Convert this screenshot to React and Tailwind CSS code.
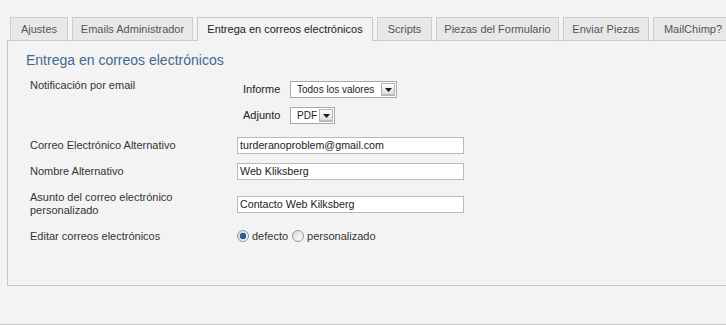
import React from "react";

const tabs = [
  { label: "Ajustes", w: "w-[58px]" },
  { label: "Emails Administrador", w: "w-[121px]" },
  { label: "Entrega en correos electrónicos", w: "w-[176px]", active: true },
  { label: "Scripts", w: "w-[55px]" },
  { label: "Piezas del Formulario", w: "w-[123px]" },
  { label: "Enviar Piezas", w: "w-[86px]" },
  { label: "MailChimp?", w: "w-[80px]" },
];

function Arrow() {
  return (
    <span className="flex h-[13px] w-[14px] shrink-0 items-center justify-center border border-[#b5b5b5] bg-gradient-to-b from-[#fdfdfd] to-[#d9d9d9] shadow-[inset_0_-1px_0_#c0c0c0]">
      <svg width="7" height="4" viewBox="0 0 7 4">
        <polygon points="0,0 7,0 3.5,4" fill="#1a1a1a" />
      </svg>
    </span>
  );
}

function Select({ value, w }) {
  return (
    <div className={`flex h-[17px] ${w} items-center justify-between border border-[#a8a8a8] bg-white pl-[6px] pr-[1px] text-[10px] text-[#222]`}>
      <span className="whitespace-nowrap leading-[14px]">{value}</span>
      <Arrow />
    </div>
  );
}

function Input({ value }) {
  return (
    <div className="flex h-[17px] w-[227px] items-center whitespace-nowrap border border-[#b9b9b9] bg-white pl-[2px] text-[10.7px] leading-[13px] text-[#222]">
      {value}
    </div>
  );
}

function Radio({ checked }) {
  return (
    <span className="flex h-[12px] w-[12px] shrink-0 items-center justify-center rounded-full border border-[#8c99a6] bg-gradient-to-br from-[#dcdcdc] to-[#ffffff]">
      {checked && <span className="h-[6px] w-[6px] rounded-full bg-[#2c5f93] shadow-[0_0_1px_#0b3566]" />}
    </span>
  );
}

export default function App() {
  return (
    <div className="h-[325px] w-[726px] overflow-hidden border-b border-[#c6c6c6] bg-[#f3f3f3] font-['Liberation_Sans',Arial,sans-serif] text-[11px] text-[#333]">
      <div className="flex gap-[4px] pl-[10px] pt-[17px]">
        {tabs.map((t) =>
          t.active ? (
            <div
              key={t.label}
              className={`relative z-10 flex h-[24px] shrink-0 items-center justify-center whitespace-nowrap border border-b-0 border-[#c8c8c8] bg-[#f3f3f3] text-[#222] ${t.w}`}
            >
              {t.label}
            </div>
          ) : (
            <div
              key={t.label}
              className={`flex h-[24px] shrink-0 items-center justify-center whitespace-nowrap border border-[#cdcdcd] bg-[#e8e8e8] text-[#555] ${t.w}`}
            >
              {t.label}
            </div>
          )
        )}
      </div>
      <div className="-mt-px ml-[7px] h-[246px] border border-r-0 border-[#c8c8c8] pl-[18px] pt-[11px]">
        <h2 className="text-[14px] leading-[17px] text-[#416a8e]">Entrega en correos electrónicos</h2>
        <div className="ml-[4px] mt-[7px] flex flex-col">
          <div className="flex items-start">
            <div className="w-[207px] pt-[3px] leading-[13px]">Notificación por email</div>
            <div className="flex flex-col gap-[9px] pl-[6px] pt-[5px]">
              <div className="flex items-center">
                <span className="w-[47px] text-[#222]">Informe</span>
                <Select value="Todos los valores" w="w-[107px]" />
              </div>
              <div className="flex items-center">
                <span className="w-[47px] text-[#222]">Adjunto</span>
                <Select value="PDF" w="w-[45px]" />
              </div>
            </div>
          </div>
          <div className="mt-[13px] flex items-center">
            <div className="w-[207px] leading-[13px]">Correo Electrónico Alternativo</div>
            <Input value="turderanoproblem@gmail.com" />
          </div>
          <div className="mt-[9px] flex items-center">
            <div className="w-[207px] leading-[13px]">Nombre Alternativo</div>
            <Input value="Web Kliksberg" />
          </div>
          <div className="mt-[11px] flex items-center">
            <div className="w-[207px] leading-[13px]">
              Asunto del correo electrónico
              <br />
              personalizado
            </div>
            <Input value="Contacto Web Kilksberg" />
          </div>
          <div className="mt-[11px] flex items-center">
            <div className="w-[207px] leading-[13px]">Editar correos electrónicos</div>
            <div className="flex items-center">
              <Radio checked />
              <span className="ml-[3px] mr-[4px]">defecto</span>
              <Radio />
              <span className="ml-[3px]">personalizado</span>
            </div>
          </div>
        </div>
      </div>
    </div>
  );
}
